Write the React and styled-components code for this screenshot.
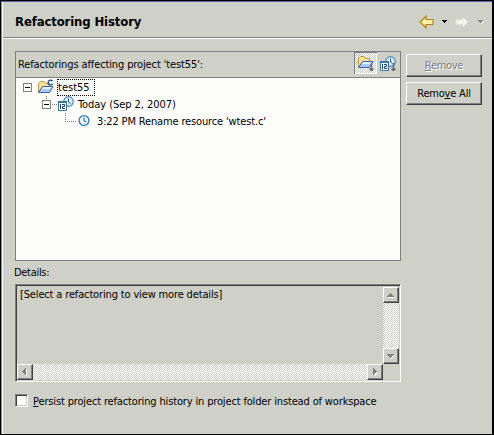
import React from 'react';
import styled, { createGlobalStyle, css } from 'styled-components';

const Global = createGlobalStyle`
  * { box-sizing: border-box; }
  body { margin: 0; background: #cfd0c8; }
`;

const Window = styled.div`
  width: 494px;
  height: 435px;
  display: flex;
  flex-direction: column;
  background: #cfd0c8;
  border: 1px solid #000;
  border-right-width: 2px;
  box-shadow: inset 0 1px #5661a8, inset 1px 0 #8b8c86, inset 2px 0 #fff;
  font: 11px/14px 'DejaVu Sans Condensed', 'DejaVu Sans', sans-serif;
  font-stretch: condensed;
  color: #000;
  overflow: hidden;
`;

const Text = styled.span`
  white-space: pre;
  letter-spacing: ${(p) => p.$track ?? -0.15}px;
`;

const Header = styled.header`
  display: flex;
  align-items: center;
  height: 38px;
  margin: 0 0 0 2px;
  padding: 5px 8px 0 12px;
  border-bottom: 1px solid #fff;
  box-shadow: inset 0 -1px #808080;
`;

const Title = styled.h1`
  margin: 0;
  flex: 1;
  font-size: 13px;
  line-height: 18px;
  font-weight: bold;
  white-space: nowrap;
  letter-spacing: ${(p) => p.$track}px;
`;

const Nav = styled.nav`
  display: flex;
  align-items: center;
  height: 18px;
`;

const Body = styled.main`
  display: flex;
  padding: 12px 0 0 14px;
  gap: 5px;
`;

const Column = styled.div`
  width: 386px;
  display: flex;
  flex-direction: column;
`;

const Viewer = styled.section`
  height: 210px;
  border: 1px solid #808080;
  background: #fdfefc;
`;

const ViewerBar = styled.div`
  display: flex;
  align-items: flex-start;
  height: 26px;
  padding-left: 2px;
  background: #cfd0c8;
  border-bottom: 1px solid #808080;
`;

const Label = styled.div`
  flex: 1;
  padding-top: 6px;
`;

const dither = css`
  background: repeating-conic-gradient(#fff 0 25%, #cfd0c8 0 50%) 0 0 / 2px 2px;
`;

const ToolButton = styled.div`
  width: 23px;
  height: 22px;
  padding: 2px 2px 0 3px;
  ${(p) => p.$on && css`
    ${dither}
    box-shadow: inset 1px 1px #808080, inset -1px -1px #fff;
  `}
  svg { display: block; }
`;

const Tree = styled.div`
  padding-top: 1px;
`;

const TreeRow = styled.div`
  display: flex;
  align-items: flex-start;
  height: 17px;
  padding-left: ${(p) => p.$indent}px;
  svg { display: block; flex: none; }
`;

const Focus = styled.span`
  display: flex;
  align-items: center;
  height: 17px;
  width: 38px;
  border: 1px dotted #000;
`;

const TreeLabel = styled.span`
  display: flex;
  padding: 2px 0 0 3px;
`;

const DetailsLabel = styled.div`
  margin-top: 5px;
  height: 18px;
  margin-left: -1px;
`;

const Details = styled.section`
  display: grid;
  grid-template-columns: 1fr 16px;
  grid-template-rows: 1fr 16px;
  width: 386px;
  height: 98px;
  border: 1px solid;
  border-color: #808080 #fff #fff #808080;
  box-shadow: inset 1px 1px #404044;
  padding: 2px 1px 1px 1px;
`;

const DetailsText = styled.div`
  padding: 1px 3px;
`;

const Track = styled.div`
  display: flex;
  flex-direction: ${(p) => (p.$vertical ? 'column' : 'row')};
  justify-content: space-between;
  ${dither}
`;

const raised = css`
  background: #cfd0c8;
  border: 1px solid;
  border-color: #fff #404044 #404044 #fff;
  box-shadow: inset -1px -1px #808080;
`;

const Arrow = styled.div`
  width: 16px;
  height: 16px;
  ${raised}
  svg { display: block; }
`;

const Buttons = styled.div`
  display: flex;
  flex-direction: column;
  gap: 5px;
  padding-top: 3px;
`;

const Button = styled.button`
  width: 76px;
  height: 23px;
  padding: 0;
  font: inherit;
  border-radius: 0;
  ${raised}
  color: ${(p) => (p.disabled ? '#808080' : '#000')};
  text-shadow: ${(p) => (p.disabled ? '1px 1px #fff' : 'none')};
`;

const Mnemonic = styled.span`
  text-decoration: underline;
  text-decoration-thickness: 1px;
  text-underline-offset: 1px;
  text-decoration-skip-ink: none;
`;

const Persist = styled.label`
  display: flex;
  align-items: flex-start;
  gap: 5px;
  height: 16px;
  margin-top: 12px;
`;

const PersistText = styled.span`
  padding-top: 1px;
`;

const Check = styled.span`
  width: 13px;
  height: 13px;
  background: #fff;
  border: 1px solid;
  border-color: #808080 #fff #fff #808080;
  box-shadow: inset 1px 1px #404044, inset -1px -1px #cfd0c8;
`;

const Expander = ({ stub, lead }) => (
  <svg width={lead} height="17" shapeRendering="crispEdges">
    {stub && <path d="M4.5 0V4M10 8.5H15" stroke="#808080" strokeDasharray="1 1" />}
    <rect x="0.5" y="4.5" width="8" height="8" fill="#fff" stroke="#808080" />
    <path d="M2 8.5H7" stroke="#000" />
  </svg>
);

const Branch = () => (
  <svg width="13" height="17" shapeRendering="crispEdges">
    <path d="M0.5 0V9M2 8.5H12" stroke="#808080" strokeDasharray="1 1" />
  </svg>
);

const folderShapes = (
  <>
    <path d="M1.5 13V4.5L3.5 2.5H7L8.5 4.5H12.5V9H5Z" fill="#fbe096" stroke="#c29a4c" />
    <path d="M1.5 13.5L5.5 7.5H16L12.5 13.5Z" fill="#a9c9f2" stroke="#3c62ac" />
    <path d="M6 8.5H14.5M5.3 9.5H13" stroke="#e6f2ff" />
  </>
);

const ProjectIcon = () => (
  <svg width="20" height="16" viewBox="0 0 20 16">
    {folderShapes}
    <path d="M15.5 2.2C14.6 .8 11.2 .8 11.2 3.5S14.6 6.2 15.5 4.8" fill="none" stroke="#2c6296" strokeWidth="1.6" />
  </svg>
);

const DownMark = () => (
  <path d="M13.5 7V15M11.5 12.5L13.5 14.5L15.5 12.5" fill="none" stroke="#606a74" strokeWidth="1.5" />
);

const FolderMenuIcon = () => (
  <svg width="18" height="18" viewBox="0 0 18 18">
    {folderShapes}
    <g transform="translate(1 2)"><DownMark /></g>
  </svg>
);

const calendarShapes = (
  <>
    <circle cx="10.5" cy="5.5" r="4.8" fill="#d9ecfa" stroke="#4a88bd" strokeWidth="1.2" />
    <path d="M10.5 2.5V6L12.5 7.5" fill="none" stroke="#24558c" />
    <path d="M0.5 5.5H8.5V14.5H0.5Z" fill="#fff" stroke="#3974a9" />
    <path d="M0 6H9" stroke="#3974a9" strokeWidth="2" />
    <path d="M2.5 8V13M4 8.5H6.5V10.5H4.5V12.5H7" fill="none" stroke="#173f70" />
  </>
);

const DateIcon = () => (
  <svg width="17" height="16" viewBox="0 0 17 16">{calendarShapes}</svg>
);

const DateMenuIcon = () => (
  <svg width="18" height="18" viewBox="0 0 18 18">
    <g transform="translate(0 2)">
      {calendarShapes}
      <DownMark />
    </g>
  </svg>
);

const ClockIcon = () => (
  <svg width="12" height="16" viewBox="0 0 12 16">
    <circle cx="6" cy="7.5" r="4.9" fill="#e8f5ff" stroke="#3b7db5" strokeWidth="1.4" />
    <path d="M6 4.5V8L8 9" fill="none" stroke="#24558c" />
  </svg>
);

const BackIcon = () => (
  <svg width="16" height="14" viewBox="0 0 16 14">
    <path d="M1 7L7 1.2V4.5H14V9.5H7V12.8Z" fill="#fff0a8" stroke="#b98118" strokeWidth="1.2" />
  </svg>
);

const ForwardIcon = () => (
  <svg width="14" height="14" viewBox="0 0 14 14">
    <path d="M12.8 7L8 2V4.5H1V9.5H8V12Z" fill="#f4f2ee" stroke="#e2dfda" />
  </svg>
);

const Caret = ({ color, lit }) => (
  <svg width="7" height="6" shapeRendering="crispEdges">
    {lit && <path d="M2 2H7L4 5Z" fill="#fff" />}
    <path d="M1 1H6V2H5V3H4V4H3V3H2V2H1Z" fill={color} />
  </svg>
);

const arrowShapes = {
  up: 'M3 9H10V8H9V7H8V6H7V5H6V6H5V7H4V8H3Z',
  down: 'M3 5H10V6H9V7H8V8H7V9H6V8H5V7H4V6H3Z',
  left: 'M8 3V10H7V9H6V8H5V7H4V6H5V5H6V4H7V3Z',
  right: 'M5 3V10H6V9H7V8H8V7H9V6H8V5H7V4H6V3Z',
};

const ScrollArrow = ({ dir }) => (
  <Arrow>
    <svg width="14" height="14" shapeRendering="crispEdges">
      <path d={arrowShapes[dir]} fill="#fff" transform="translate(1 1)" />
      <path d={arrowShapes[dir]} fill="#808080" />
    </svg>
  </Arrow>
);

const Gap = styled.span`
  width: ${(p) => p.$w}px;
`;

export default function App() {
  return (
    <>
      <Global />
      <Window>
        <Header>
          <Title $track={-0.13}>Refactoring History</Title>
          <Nav>
            <BackIcon />
            <Gap $w={6} />
            <Caret color="#000" />
            <Gap $w={7} />
            <ForwardIcon />
            <Gap $w={8} />
            <Caret color="#808080" lit />
          </Nav>
        </Header>
        <Body>
          <Column>
            <Viewer>
              <ViewerBar>
                <Label><Text $track={-0.12}>Refactorings affecting project 'test55':</Text></Label>
                <ToolButton $on><FolderMenuIcon /></ToolButton>
                <ToolButton><DateMenuIcon /></ToolButton>
              </ViewerBar>
              <Tree>
                <TreeRow $indent={7}>
                  <Expander lead={14} />
                  <ProjectIcon />
                  <Focus><Text $track={0}>test55</Text></Focus>
                </TreeRow>
                <TreeRow $indent={26}>
                  <Expander stub lead={16} />
                  <DateIcon />
                  <TreeLabel><Text $track={-0.06}>Today (Sep 2, 2007)</Text></TreeLabel>
                </TreeRow>
                <TreeRow $indent={49}>
                  <Branch />
                  <ClockIcon />
                  <Gap $w={4} />
                  <TreeLabel><Text>3:22 PM Rename resource 'wtest.c'</Text></TreeLabel>
                </TreeRow>
              </Tree>
            </Viewer>
            <DetailsLabel><Text $track={-0.3}>Details:</Text></DetailsLabel>
            <Details>
              <DetailsText><Text>[Select a refactoring to view more details]</Text></DetailsText>
              <Track $vertical>
                <ScrollArrow dir="up" />
                <ScrollArrow dir="down" />
              </Track>
              <Track>
                <ScrollArrow dir="left" />
                <ScrollArrow dir="right" />
              </Track>
            </Details>
            <Persist>
              <Check />
              <PersistText>
                <Text>
                  <Mnemonic>P</Mnemonic>ersist project refactoring history in project folder instead of workspace
                </Text>
              </PersistText>
            </Persist>
          </Column>
          <Buttons>
            <Button disabled><Text $track={-0.3}><Mnemonic>R</Mnemonic>emove</Text></Button>
            <Button><Text $track={-0.2}>Remo<Mnemonic>v</Mnemonic>e All</Text></Button>
          </Buttons>
        </Body>
      </Window>
    </>
  );
}
